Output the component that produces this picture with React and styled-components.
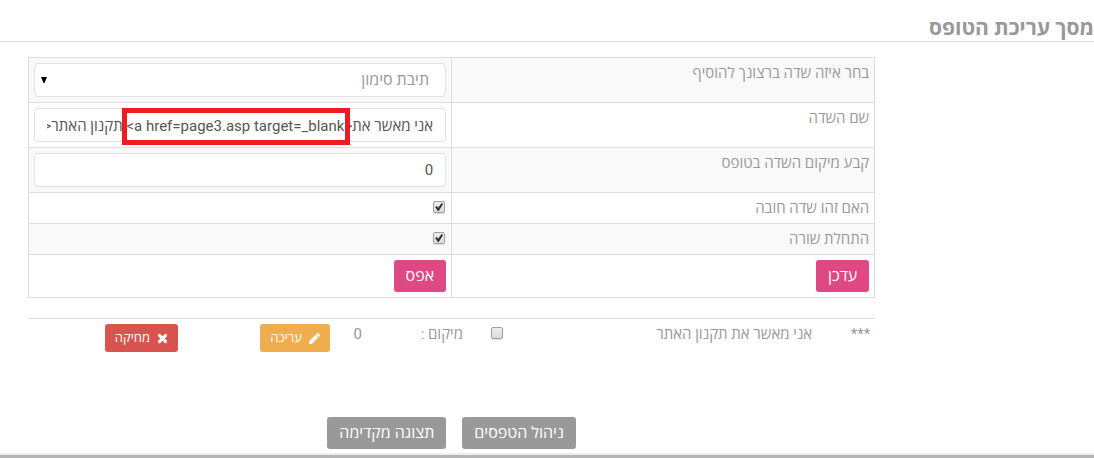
import React, { useState } from 'react';
import styled, { createGlobalStyle } from 'styled-components';
import { FaPen } from 'react-icons/fa';

const GlobalStyle = createGlobalStyle`
	* {
		box-sizing: border-box;
	}
	body {
		margin: 0;
		background-color: #fff;
		color: #999;
		font-family: Roboto, 'Open Sans', 'DejaVu Sans', sans-serif;
		font-size: 15px;
		line-height: 20px;
	}
`;

export default function App() {
	const [fieldType, setFieldType] = useState('checkbox');
	const [name, setName] = useState(
		'אני מאשר את<a href=page3.asp target=_blank> תקנון האתר</a>'
	);
	const [position, setPosition] = useState('0');

	return (
		<Page dir='rtl'>
			<GlobalStyle />
			<Title>מסך עריכת הטופס</Title>
			<Content>
				<FormTable>
					<tbody>
						<tr>
							<Cell>
								<Label htmlFor='fieldType'>בחר איזה שדה ברצונך להוסיף</Label>
							</Cell>
							<Cell>
								<SelectBox>
									<Select
										id='fieldType'
										value={fieldType}
										onChange={(e) => setFieldType(e.target.value)}>
										<option value='checkbox'>תיבת סימון</option>
									</Select>
									<Arrow viewBox='0 0 6 6'>
										<path d='M0 0h6L3.5 6h-1z' />
									</Arrow>
								</SelectBox>
							</Cell>
						</tr>
						<tr>
							<Cell>
								<Label htmlFor='fieldName'>שם השדה</Label>
							</Cell>
							<Cell>
								<Marked>
									<Input
										id='fieldName'
										type='text'
										value={name}
										onChange={(e) => setName(e.target.value)}
									/>
									<Marker />
								</Marked>
							</Cell>
						</tr>
						<tr>
							<Cell>
								<Label htmlFor='fieldPosition'>קבע מיקום השדה בטופס</Label>
							</Cell>
							<Cell>
								<Input
									id='fieldPosition'
									type='text'
									value={position}
									onChange={(e) => setPosition(e.target.value)}
								/>
							</Cell>
						</tr>
						<tr>
							<Cell>
								<Label htmlFor='required'>האם זהו שדה חובה</Label>
							</Cell>
							<Cell>
								<Checkbox id='required' type='checkbox' defaultChecked />
							</Cell>
						</tr>
						<tr>
							<Cell>
								<Label htmlFor='newLine'>התחלת שורה</Label>
							</Cell>
							<Cell>
								<Checkbox id='newLine' type='checkbox' defaultChecked />
							</Cell>
						</tr>
						<tr>
							<Cell>
								<Button $color='#e04884'>עדכן</Button>
							</Cell>
							<Cell>
								<Button $color='#e04884'>אפס</Button>
							</Cell>
						</tr>
					</tbody>
				</FormTable>
				<FieldsTable>
					<colgroup>
						<Col $width='58px' />
						<Col />
						<Col $width='41px' />
						<Col $width='101px' />
						<Col $width='32px' />
						<Col $width='152px' />
						<Col $width='155px' />
					</colgroup>
					<tbody>
						<tr>
							<FieldCell>***</FieldCell>
							<FieldCell>
								<Label htmlFor='terms'>אני מאשר את תקנון האתר</Label>
							</FieldCell>
							<FieldCell>
								<Checkbox id='terms' type='checkbox' />
							</FieldCell>
							<FieldCell>מיקום :</FieldCell>
							<FieldCell>0</FieldCell>
							<FieldCell>
								<SmallButton $color='#f0ad4e'>
									<FaPen />
									עריכה
								</SmallButton>
							</FieldCell>
							<FieldCell>
								<SmallButton $color='#d9534f'>
									<svg viewBox='0 0 11 11'>
										<path
											d='M2.4 2.4l6.2 6.2M8.6 2.4l-6.2 6.2'
											stroke='#fff'
											strokeWidth='3'
											strokeLinecap='round'
										/>
									</svg>
									מחיקה
								</SmallButton>
							</FieldCell>
						</tr>
					</tbody>
				</FieldsTable>
				<Actions>
					<Button $color='#999'>ניהול הטפסים</Button>
					<Button $color='#999'>תצוגה מקדימה</Button>
				</Actions>
			</Content>
			<BottomBar />
		</Page>
	);
}

const Page = styled.div`
	width: 100%;
`;
const Title = styled.h1`
	margin: 0;
	padding: 16px 0 1px;
	border-bottom: 1px solid #ddd;
	font-size: 21px;
	line-height: 24px;
	font-weight: 700;
`;
const Content = styled.main`
	padding: 15px 20% 4px 28px;
`;
const FormTable = styled.table`
	width: 100%;
	table-layout: fixed;
	border-collapse: collapse;
	tr:nth-child(odd):not(:last-child) {
		background-color: #f9f9f9;
	}
`;
const Cell = styled.td`
	padding: 5px;
	border: 1px solid #ddd;
	vertical-align: top;
`;
const Label = styled.label`
	display: block;
`;
const SelectBox = styled.div`
	position: relative;
`;
const Select = styled.select`
	display: block;
	width: 100%;
	height: 34px;
	padding: 6px 16px;
	border: 1px solid #e2e2e2;
	border-radius: 4px;
	background-color: #fff;
	color: #999;
	font: inherit;
	font-size: 16px;
	appearance: none;
`;
const Arrow = styled.svg`
	position: absolute;
	top: 14px;
	left: 7px;
	width: 6px;
	height: 6px;
	fill: #000;
	pointer-events: none;
`;
const Input = styled.input`
	display: block;
	width: 100%;
	height: 34px;
	padding: 6px 12px;
	border: 1px solid #e2e2e2;
	border-radius: 4px;
	background-color: #fff;
	color: #555;
	font: inherit;
`;
const Marked = styled.div`
	position: relative;
`;
const Marker = styled.div`
	position: absolute;
	top: 0;
	right: 96px;
	width: 228px;
	height: 37px;
	border: 5px solid #ed1c24;
	pointer-events: none;
`;
const Checkbox = styled.input`
	appearance: none;
	display: grid;
	place-items: center;
	width: 12px;
	height: 12px;
	margin: 3px 1px 5px 0;
	border: 1px solid #a0a0a0;
	border-radius: 2px;
	background: linear-gradient(#eee, #dcdcdc);
	box-shadow: 0 1px 1px #ddd;
	&:checked::before {
		content: '';
		width: 8px;
		height: 8px;
		background-color: #333;
		clip-path: polygon(0 50%, 22% 38%, 38% 58%, 80% 0, 100% 14%, 46% 100%, 34% 100%);
	}
`;
const Button = styled.button`
	display: block;
	height: 32px;
	padding: 0 12px;
	border: 0;
	border-radius: 3px;
	background-color: ${(props) => props.$color};
	color: #fff;
	font: inherit;
	font-size: 16px;
	cursor: pointer;
`;
const FieldsTable = styled.table`
	width: 100%;
	margin-top: 20px;
	table-layout: fixed;
	border-collapse: collapse;
	border-top: 1px solid #ddd;
`;
const Col = styled.col`
	width: ${(props) => props.$width || 'auto'};
`;
const FieldCell = styled.td`
	padding: 5px;
	vertical-align: top;
`;
const SmallButton = styled.button`
	display: flex;
	align-items: center;
	gap: 7px;
	height: 28px;
	padding: 0 10px;
	border: 0;
	border-radius: 3px;
	background-color: ${(props) => props.$color};
	color: #fff;
	font: inherit;
	font-size: 13px;
	cursor: pointer;
	svg {
		width: 11px;
		height: 11px;
	}
`;
const Actions = styled.div`
	display: flex;
	justify-content: center;
	gap: 16px;
	margin-top: 60px;
`;
const BottomBar = styled.div`
	height: 5px;
	border-top: 2px solid #eee;
	background-color: #b4b4b4;
`;
